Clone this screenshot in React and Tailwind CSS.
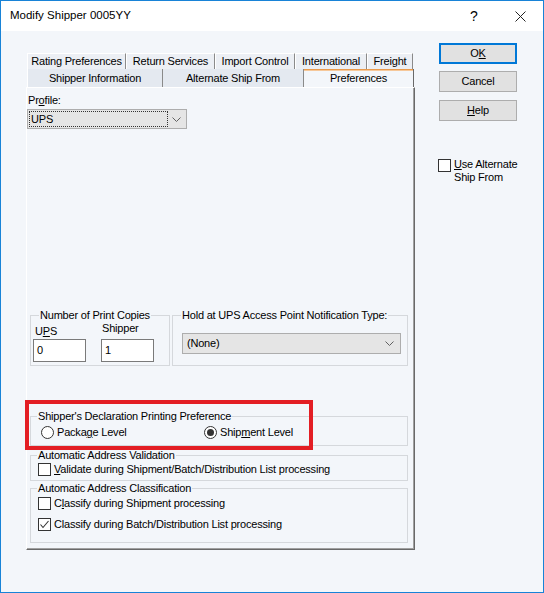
import React from "react";

const U = ({ children }) => (
  <span className="underline underline-offset-[1px] decoration-1">{children}</span>
);

const Check = ({ checked }) => (
  <span className="w-[13px] h-[13px] border border-[#333] bg-white flex items-center justify-center shrink-0">
    {checked && (
      <svg width="11" height="11" viewBox="0 0 11 11">
        <polyline points="1.5,5.5 4,8.5 9.5,2" fill="none" stroke="#333" strokeWidth="1.1" />
      </svg>
    )}
  </span>
);

const Radio = ({ checked }) => (
  <span className="w-[13px] h-[13px] rounded-full border border-[#333] bg-white flex items-center justify-center shrink-0">
    {checked && <span className="w-[7px] h-[7px] rounded-full bg-[#333]" />}
  </span>
);

const Chevron = () => (
  <svg width="9" height="5" viewBox="0 0 9 5">
    <polyline points="0.5,0.5 4.5,4.5 8.5,0.5" fill="none" stroke="#606060" strokeWidth="1" />
  </svg>
);

const Group = ({ label, className, legendClass = "ml-[6px]", children }) => (
  <fieldset className={`border border-[#d5d8dc] ${className}`}>
    <legend className={`px-[1px] leading-[13px] ${legendClass}`}>{label}</legend>
    {children}
  </fieldset>
);

const backTabs = [
  ["Rating Preferences", "w-[99px]"],
  ["Return Services", "w-[89px]"],
  ["Import Control", "w-[80px]"],
  ["International", "w-[72px]"],
  ["Freight", "w-[46px]"],
];

export default function App() {
  return (
    <div className="w-[544px] h-[593px] border border-[#1883d7] bg-[#f3f6fa] flex flex-col font-['Liberation_Sans',Arial,sans-serif] text-[11px] tracking-[-0.2px] text-black">
      {/* title bar */}
      <div className="h-[30px] bg-white flex items-center shrink-0 tracking-normal">
        <span className="ml-[9px] text-[11.5px]">Modify Shipper 0005YY</span>
        <span className="ml-auto w-[46px] text-center text-[14px]">?</span>
        <span className="w-[46px] flex justify-center">
          <svg width="11" height="11" viewBox="0 0 11 11">
            <path d="M0.5 0.5 L10.5 10.5 M10.5 0.5 L0.5 10.5" stroke="#222" strokeWidth="1" />
          </svg>
        </span>
      </div>

      <div className="flex flex-1">
        {/* tab control */}
        <div className="ml-[25px] mt-[22px] flex flex-col">
          <div className="flex ml-[1px]">
            {backTabs.map(([t, w]) => (
              <div
                key={t}
                className={`${w} h-[16px] flex items-center justify-center bg-[#eceff4] border-l border-l-white border-t border-t-white border-r border-r-[#8a8a8a]`}
              >
                {t}
              </div>
            ))}
          </div>
          <div className="flex ml-[1px]">
            <div className="w-[136px] h-[18px] flex items-center justify-center bg-[#e4e9f0] border-l border-l-white border-r border-r-[#8a8a8a]">
              Shipper Information
            </div>
            <div className="w-[141px] h-[18px] flex items-center justify-center bg-[#e4e9f0] border-r border-r-[#8a8a8a]">
              Alternate Ship From
            </div>
            <div className="w-[110px] h-[18px] flex items-center justify-center shadow-[inset_0_1px_0_#e99a4c,inset_0_2px_0_#f6c89a] border-r border-r-[#696969]">
              Preferences
            </div>
          </div>
          <div className="w-[389px] h-[463px] border-l border-l-white border-t border-t-white border-r border-b border-r-[#696969] border-b-[#696969] shadow-[inset_-1px_-1px_0_#a0a0a0] flex flex-col">
            <div className="ml-[1px] mt-[5px] leading-[14px]">
              Pr<U>o</U>file:
            </div>
            <div className="mt-[2px] w-[160px] h-[20px] border border-[#adadad] bg-[#e5e5e5] flex items-center pl-[1px] pr-[5px]">
              <div className="w-[139px] h-[16px] border border-dotted border-[#333] flex items-center pl-[1px]">
                UPS
              </div>
              <span className="ml-auto">
                <Chevron />
              </span>
            </div>

            <div className="flex mt-[180px] ml-[3px]">
              <Group label="Number of Print Copies" className="w-[140px] h-[57px]" legendClass="ml-[8px]">
                <div className="flex">
                  <div className="ml-[2px] mt-[3px] flex flex-col">
                    <span className="ml-[2px] leading-[13px]">
                      U<U>P</U>S
                    </span>
                    <div className="mt-[1px] w-[53px] h-[23px] border border-[#7a7a7a] bg-white flex items-center pl-[3px]">0</div>
                  </div>
                  <div className="ml-[15px] flex flex-col">
                    <span className="ml-[1px] leading-[13px]">Shipper</span>
                    <div className="mt-[4px] w-[53px] h-[23px] border border-[#7a7a7a] bg-white flex items-center pl-[3px]">1</div>
                  </div>
                </div>
              </Group>
              <Group
                label="Hold at UPS Access Point Notification Type:"
                className="ml-[2px] w-[236px] h-[57px]"
                legendClass="ml-[8px]"
              >
                <div className="ml-[9px] mt-[11px] w-[219px] h-[21px] border border-[#adadad] bg-[#e5e5e5] flex items-center pl-[4px] pr-[6px]">
                  (None)
                  <span className="ml-auto">
                    <Chevron />
                  </span>
                </div>
              </Group>
            </div>

            <div className="relative ml-[3px] mt-[44px]">
              <Group label="Shipper's Declaration Printing Preference" className="w-[378px] h-[36px]">
                <div className="flex items-center mt-[3px] ml-[10px] h-[13px]">
                  <div className="w-[163px] flex items-center">
                    <Radio />
                    <span className="ml-[3px]">
                      Packa<U>g</U>e Level
                    </span>
                  </div>
                  <Radio checked />
                  <span className="ml-[3px]">
                    Ship<U>m</U>ent Level
                  </span>
                </div>
              </Group>
              <div className="absolute left-[-5px] top-[-10px] w-[288px] h-[50px] border-4 border-[#e31e24] pointer-events-none" />
            </div>

            <Group label="Automatic Address Validation" className="ml-[3px] mt-[3px] w-[378px] h-[32px]">
              <div className="flex items-center mt-[1px] ml-[7px] h-[13px]">
                <Check />
                <span className="ml-[3px]">
                  <U>V</U>alidate during Shipment/Batch/Distribution List processing
                </span>
              </div>
            </Group>

            <Group label="Automatic Address Classification" className="ml-[3px] mt-[1px] w-[378px] h-[61px]">
              <div className="flex items-center mt-[2px] ml-[7px] h-[13px]">
                <Check />
                <span className="ml-[3px]">
                  C<U>l</U>assify during Shipment processing
                </span>
              </div>
              <div className="flex items-center mt-[8px] ml-[7px] h-[13px]">
                <Check checked />
                <span className="ml-[3px]">Classify during Batch/Distribution List processing</span>
              </div>
            </Group>
          </div>
        </div>

        {/* buttons */}
        <div className="ml-[24px] mt-[12px] flex flex-col">
          <button className="w-[78px] h-[21px] border-2 border-[#0078d7] bg-[#e1e1e1] flex items-center justify-center">
            O<U>K</U>
          </button>
          <button className="mt-[7px] w-[78px] h-[21px] border border-[#adadad] bg-[#e1e1e1] flex items-center justify-center">
            Cancel
          </button>
          <button className="mt-[8px] w-[78px] h-[21px] border border-[#adadad] bg-[#e1e1e1] flex items-center justify-center">
            <U>H</U>elp
          </button>
          <div className="mt-[38px] -ml-[1px] flex">
            <Check />
            <div className="ml-[3px] flex flex-col leading-[13px] -mt-[1px]">
              <span>
                <U>U</U>se Alternate
              </span>
              <span>Ship From</span>
            </div>
          </div>
        </div>
      </div>
    </div>
  );
}
